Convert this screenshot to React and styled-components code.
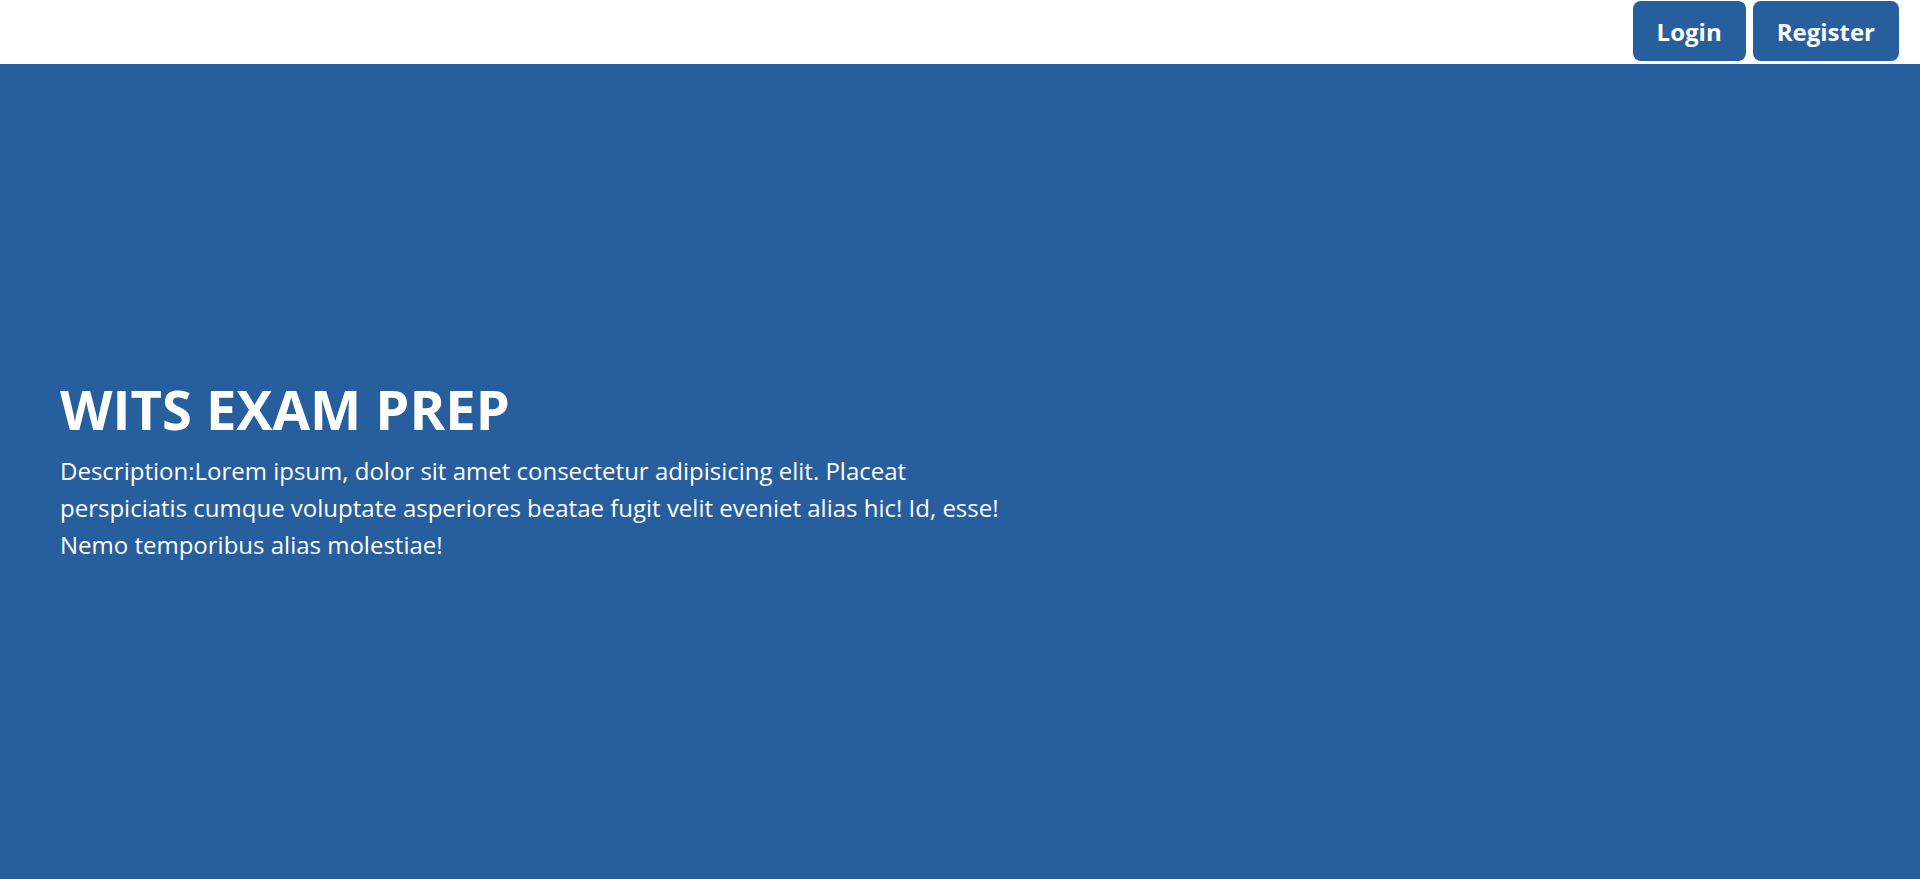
import React from 'react';
import styled, { createGlobalStyle } from 'styled-components';

const GlobalStyle = createGlobalStyle`
  * {
    box-sizing: border-box;
  }
  body {
    margin: 0;
    font-family: 'Open Sans', 'Noto Sans', sans-serif;
    background: #ffffff;
  }
`;

const BLUE = '#275e9e';

export default function App() {
  return (
    <>
      <GlobalStyle />
      <S_Page>
        <S_Header>
          <S_NavButton>Login</S_NavButton>
          <S_NavButton>Register</S_NavButton>
        </S_Header>
        <S_Hero>
          <S_Title>WITS EXAM PREP</S_Title>
          <S_Description>
            Description:Lorem ipsum, dolor sit amet consectetur adipisicing elit. Placeat perspiciatis cumque
            voluptate asperiores beatae fugit velit eveniet alias hic! Id, esse! Nemo temporibus alias molestiae!
          </S_Description>
        </S_Hero>
      </S_Page>
    </>
  );
}

const S_Page = styled.div`
  display: flex;
  flex-direction: column;
  height: 879px;
`;

const S_Header = styled.header`
  height: 64px;
  display: flex;
  justify-content: flex-end;
  align-items: flex-start;
  gap: 7px;
  padding: 1px 21px 0 0;
  background: #ffffff;
`;

const S_NavButton = styled.button`
  height: 60px;
  padding: 0 24px;
  border: none;
  border-radius: 8px;
  background: ${BLUE};
  color: #ffffff;
  font-family: 'Open Sans', sans-serif;
  font-size: 24px;
  font-weight: 700;
  cursor: pointer;
`;

const S_Hero = styled.main`
  flex: 1;
  display: flex;
  flex-direction: column;
  justify-content: center;
  padding: 0 60px 6px;
  background: ${BLUE};
  color: #ffffff;
`;

const S_Title = styled.h1`
  margin: 0 0 9px;
  font-size: 54.3px;
  font-weight: 700;
  line-height: 1.3;
`;

const S_Description = styled.p`
  margin: 0;
  max-width: 960px;
  font-size: 24px;
  line-height: 36.7px;
`;
